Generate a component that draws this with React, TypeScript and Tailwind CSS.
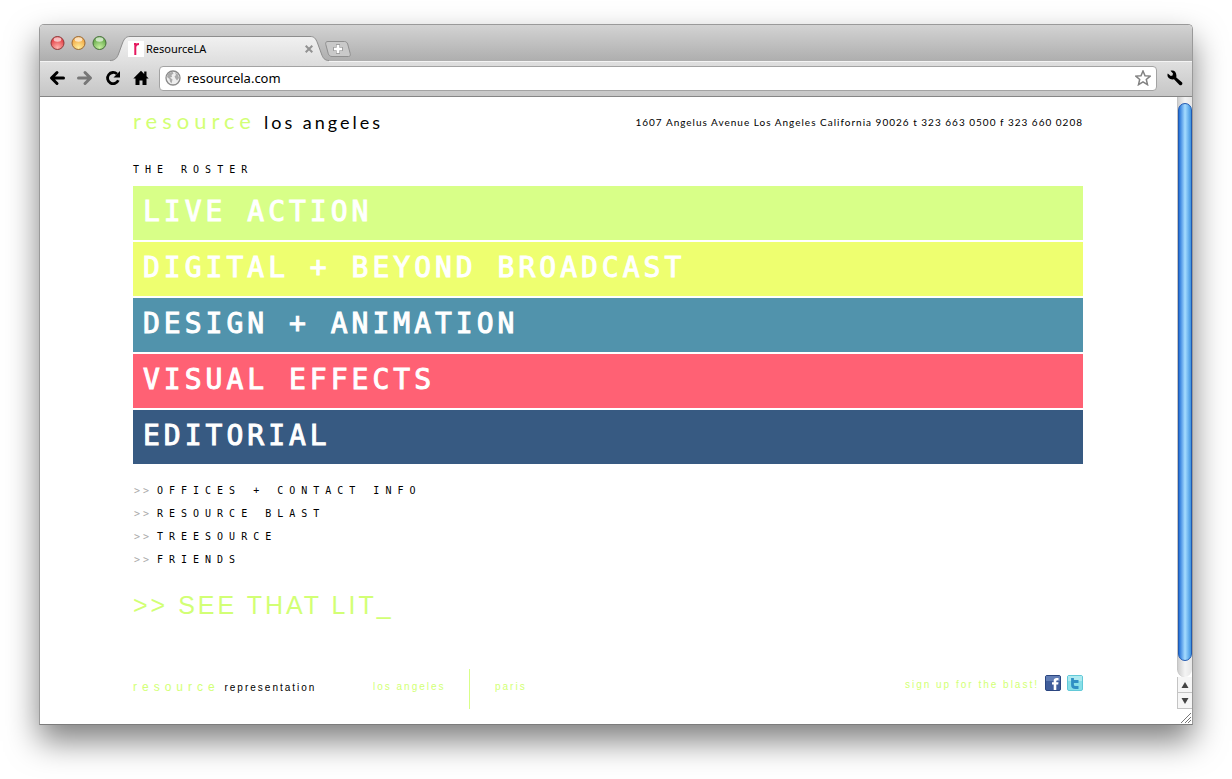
import React from "react";

const sections = [
  { name: "LIVE ACTION", color: "bg-[#d8ff88]" },
  { name: "DIGITAL + BEYOND BROADCAST", color: "bg-[#eeff70]" },
  { name: "DESIGN + ANIMATION", color: "bg-[#5193ac]" },
  { name: "VISUAL EFFECTS", color: "bg-[#ff6174]" },
  { name: "EDITORIAL", color: "bg-[#375a82]" },
];

const links = ["OFFICES + CONTACT INFO", "RESOURCE BLAST", "TREESOURCE", "FRIENDS"];

function TrafficLight({ label, color, rim, glow }: { label: string; color: string; rim: string; glow: string }) {
  return (
    <button aria-label={label} className="size-[15px]">
      <svg viewBox="0 0 15 15" className="size-full">
        <defs>
          <radialGradient id={label} cx="50%" cy="85%" r="75%">
            <stop offset="0" stopColor={glow} />
            <stop offset="1" stopColor={color} />
          </radialGradient>
        </defs>
        <circle cx="7.5" cy="7" r="6.5" fill={`url(#${label})`} stroke={rim} strokeWidth="1" />
        <ellipse cx="7.5" cy="3.5" rx="3.8" ry="2.2" fill="#fff" opacity="0.65" />
      </svg>
    </button>
  );
}

function TabStrip() {
  return (
    <div className="flex h-9 items-end rounded-t bg-linear-to-b from-[#d3d3d3] to-[#aeaeae]">
      <div className="mb-[10px] ml-[10px] flex gap-[6px]">
        <TrafficLight label="Close" color="#e0353c" rim="#8f3a3a" glow="#ffb3ad" />
        <TrafficLight label="Minimize" color="#f0a23c" rim="#9a6a34" glow="#ffee9c" />
        <TrafficLight label="Zoom" color="#5fa545" rim="#47703a" glow="#c8f0a0" />
      </div>
      <div className="relative ml-[3px] flex h-[25px] w-[219px] items-center">
        <svg viewBox="0 0 219 26" className="absolute inset-x-0 top-0 h-[26px] w-full">
          <defs>
            <linearGradient id="tab" x1="0" y1="0" x2="0" y2="1">
              <stop offset="0" stopColor="#f1f1f1" />
              <stop offset="1" stopColor="#dfdfdf" />
            </linearGradient>
          </defs>
          <path
            d="M0 24.5C5 24.5 7 22 8.500 18L12.500 7C14.500 2 16.500 .5 20 .5H200C204 .5 205.500 2 207.500 7L211.500 18C213 22 214.500 24.500 219 24.500V26H0Z"
            fill="url(#tab)"
          />
          <path
            d="M0 24.5C5 24.5 7 22 8.500 18L12.500 7C14.500 2 16.500 .5 20 .5H200C204 .5 205.500 2 207.500 7L211.500 18C213 22 214.500 24.500 219 24.500"
            fill="none"
            stroke="#8d8d8d"
          />
        </svg>
        <div className="relative flex w-full items-center pr-4 pl-[18px]">
          <svg viewBox="0 0 16 16" className="size-4">
            <rect width="16" height="16" fill="#fff" />
            <path d="M7.300 14V3H6M7.300 6C7.500 4 8.500 3 11 3" fill="none" stroke="#e5195f" strokeWidth="2" />
          </svg>
          <span className="ml-[2px] flex-1 text-[11px] leading-4 text-black">ResourceLA</span>
          <button aria-label="Close tab" className="size-2">
            <svg viewBox="0 0 8 8" className="size-full">
              <path d="M.7 .7L7.300 7.300M7.300 .7L.7 7.300" stroke="#929292" strokeWidth="2" />
            </svg>
          </button>
        </div>
      </div>
      <button aria-label="New tab" className="mb-1 -ml-[4px] h-4 w-[26px]">
        <svg viewBox="0 0 26 16" className="size-full">
          <path
            d="M3 .5H19.500C21 .5 22 1.500 22.700 3L25.200 12.500C25.600 14.500 25 15.500 23.500 15.500H7C5 15.500 4 14.500 3.300 12.800L.8 3.500C.3 1.500 1 .5 3 .5Z"
            fill="#c9c9c9"
            stroke="#8f8f8f"
          />
          <path d="M13 3V13M8 8H18" stroke="#a0a0a0" strokeWidth="4" />
          <path d="M13 4V12M9 8H17" stroke="#fff" strokeWidth="2.600" />
        </svg>
      </button>
    </div>
  );
}

function Toolbar() {
  return (
    <div className="flex h-9 items-center border-t border-b border-t-[#f4f4f4] border-b-[#858585] bg-linear-to-b from-[#dfdfdf] to-[#c6c6c6] pr-[9px] pb-[2px] pl-[9px]">
      <div className="flex gap-3">
        <button aria-label="Back" className="size-4">
          <svg viewBox="0 0 16 16" className="size-full">
            <path d="M14.500 8H4M8 2.500L2.500 8L8 13.500" fill="none" stroke="#000" strokeWidth="3" strokeLinejoin="round" strokeLinecap="round" />
          </svg>
        </button>
        <button aria-label="Forward" className="size-4">
          <svg viewBox="0 0 16 16" className="size-full">
            <path d="M1.500 8H12M8 2.500L13.500 8L8 13.500" fill="none" stroke="#777" strokeWidth="3" strokeLinejoin="round" strokeLinecap="round" />
          </svg>
        </button>
        <button aria-label="Reload" className="size-4">
          <svg viewBox="0 0 16 16" className="size-full">
            <path d="M12 4A5.600 5.600 0 1 0 13.300 10.300" fill="none" stroke="#000" strokeWidth="2.800" />
            <path d="M15 1V7.500H8.500Z" fill="#000" />
          </svg>
        </button>
        <button aria-label="Home" className="size-4">
          <svg viewBox="0 0 16 16" className="size-full">
            <path d="M8 .8L.3 8.500H2.500V15H6.500V10.500H9.500V15H13.500V8.500H15.700L13.500 6.300V1.500H11.200V4Z" fill="#000" />
          </svg>
        </button>
      </div>
      <div className="ml-[10px] flex h-[25px] flex-1 items-center rounded-[4px] border border-[#a3a3a3] bg-white px-[5px]">
        <svg viewBox="0 0 16 16" className="size-4">
          <circle cx="8" cy="8" r="7" fill="#eee" stroke="#8a8a8a" strokeWidth="1.300" />
          <path
            d="M3 3.500L7.500 1.800L8.500 3.500L6.500 5L7 7L5 7.500L7.500 9.500L6.500 13.500L5 11.500L4.500 9L2 7ZM10 2.500L13 4.500L14 8L12 10.500L10.500 8.500L9.500 6.500L11 5Z"
            fill="#aaa"
          />
        </svg>
        <input
          aria-label="Address"
          defaultValue="resourcela.com"
          className="ml-[6px] min-w-0 flex-1 bg-transparent text-[13px] leading-5 text-black outline-none"
        />
        <button aria-label="Bookmark" className="size-4">
          <svg viewBox="0 0 16 16" className="size-full">
            <path
              d="M8 1L10 5.700L15.200 6.100L11.300 9.500L12.500 14.700L8 11.900L3.500 14.700L4.700 9.500L.8 6.100L6 5.700Z"
              fill="#fff"
              stroke="#828282"
              strokeWidth="1.500"
            />
          </svg>
        </button>
      </div>
      <button aria-label="Settings" className="ml-[10px] size-4">
        <svg viewBox="0 0 16 16" className="size-full">
          <path
            d="M3.500 .8L6 3.600L5.500 5.400L3.800 6L.8 3.600C-.4 6.500 1.500 9.400 5.300 9.400L7 9.300L12.500 14.900C14 16.200 16.400 14 14.900 12.300L9.300 7.500L9.400 5.500C9.300 1.300 6.500 -.4 3.500 .8Z"
            fill="#000"
          />
        </svg>
      </button>
    </div>
  );
}

function Scrollbar() {
  return (
    <div className="flex w-[15px] flex-col">
      <div className="flex flex-1 flex-col rounded-b-full border-l border-[#c4c4c4] bg-linear-to-r from-[#cfcfcf] via-[#f4f4f4] to-[#e6e6e6] pt-[6px] pb-4">
        <div className="flex-1 rounded-full border border-[#2159b0] bg-linear-to-r from-[#1f6fd6] via-[#a5dcff] to-[#3c93e0]" />
      </div>
      <button aria-label="Scroll up" className="flex h-4 items-center justify-center border-b border-l border-[#c4c4c4] bg-[#f6f6f6]">
        <svg viewBox="0 0 8 6" className="h-[6px] w-2">
          <path d="M4 0L7.500 6H.5Z" fill="#444" />
        </svg>
      </button>
      <button aria-label="Scroll down" className="flex h-4 items-center justify-center border-b border-l border-[#c4c4c4] bg-[#f6f6f6]">
        <svg viewBox="0 0 8 6" className="h-[6px] w-2">
          <path d="M4 6L7.500 0H.5Z" fill="#444" />
        </svg>
      </button>
      <svg viewBox="0 0 15 15" className="h-[15px] w-[15px]">
        <path d="M4 14L14 4M8 14L14 8M11 14L14 11" stroke="#777" />
      </svg>
    </div>
  );
}

function Page() {
  return (
    <div className="min-w-0 flex-1 bg-white pr-px">
      <div className="mx-auto max-w-[950px]">
        <header className="flex items-center justify-between pt-2 font-['Lato',sans-serif] leading-8 text-black">
          <h1 className="flex items-baseline gap-2 text-[18px]">
            <a href="#" className="text-[22px] tracking-[5px] text-[#d2ff75]">resource</a>
            <span className="tracking-[3px]">los angeles</span>
          </h1>
          <p className="text-[10px] tracking-[1px]">
            1607 Angelus Avenue Los Angeles California 90026 t 323 663 0500 f 323 660 0208
          </p>
        </header>

        <main>
          <h2 className="mt-[24px] font-['DejaVu_Sans_Mono',monospace] text-[10px] leading-4 tracking-[6px] text-black">
            THE ROSTER
          </h2>
          <nav className="mt-2 flex flex-col gap-[2px]">
            {sections.map((s) => (
              <a
                key={s.name}
                href="#"
                className={`h-[54px] pl-[10px] font-['DejaVu_Sans_Mono',monospace] text-[28px] leading-[52px] tracking-[4px] text-white [-webkit-text-stroke:1px_white] ${s.color}`}
              >
                {s.name}
              </a>
            ))}
          </nav>
          <ul className="mt-[15px] font-['DejaVu_Sans_Mono',monospace] text-[10px] leading-[23px] text-black">
            {links.map((l) => (
              <li key={l} className="flex">
                <span className="w-6 pl-px tracking-[3px] text-[#aaa]">&gt;&gt;</span>
                <a href="#" className="tracking-[6px]">{l}</a>
              </li>
            ))}
          </ul>
          <p className="mt-[18px] font-['Liberation_Sans',sans-serif] text-[25px] leading-8 tracking-[3px] text-[#d2ff75]">
            &gt;&gt; SEE THAT LIT_
          </p>
        </main>

        <footer className="mt-12 flex h-10 items-center font-['Liberation_Sans',sans-serif] text-[10px] leading-4 tracking-[2px] text-[#d2ff75]">
          <p className="w-60 pb-1 text-black">
            <a href="#" className="text-[12px] tracking-[5px] text-[#d2ff75]">resource</a>{" "}
            <span>representation</span>
          </p>
          <a href="#" className="flex h-10 w-[97px] items-center border-r border-[#d8ff88] pb-1">los angeles</a>
          <a href="#" className="ml-[25px] flex-1 pb-1">paris</a>
          <a href="#" className="mb-2">sign up for the blast!</a>
          <a href="#" aria-label="Facebook" className="mb-3 ml-[6px]">
            <svg viewBox="0 0 16 16" className="size-4">
              <rect x=".5" y=".5" width="15" height="15" rx="1.500" fill="#3f5d9b" stroke="#2b4680" />
              <rect x="1" y="1" width="14" height="5" fill="#627eb5" />
              <path d="M8.700 15V9.500H7V7.200H8.700V5.800C8.700 4 9.800 3 11.500 3H13.500V5.300H12.300C11.600 5.300 11.300 5.600 11.300 6.200V7.200H13.500L13.200 9.500H11.300V15Z" fill="#fff" />
            </svg>
          </a>
          <a href="#" aria-label="Twitter" className="mb-3 ml-[6px]">
            <svg viewBox="0 0 16 16" className="size-4">
              <rect x=".5" y=".5" width="15" height="15" rx="1.500" fill="#87dfe8" stroke="#62c9d8" />
              <rect x="1" y="1" width="14" height="5" fill="#aeeaf0" />
              <path d="M5.500 3V10C5.500 12 6.500 12.500 8.500 12.500H11.500M5.500 6.500H11.500" fill="none" stroke="#2f8fc4" strokeWidth="2.800" />
            </svg>
          </a>
        </footer>
      </div>
    </div>
  );
}

export default function App() {
  return (
    <div className="flex min-h-screen flex-col bg-white px-[39px] pt-6 pb-[54px] font-['Noto_Sans',sans-serif]">
      <div className="flex flex-1 flex-col rounded-t-[5px] border border-[#9a9a9a] border-b-[#7c7c7c] bg-white shadow-[0_16px_32px_rgba(0,0,0,0.5)]">
        <TabStrip />
        <Toolbar />
        <div className="flex flex-1">
          <Page />
          <Scrollbar />
        </div>
      </div>
    </div>
  );
}
